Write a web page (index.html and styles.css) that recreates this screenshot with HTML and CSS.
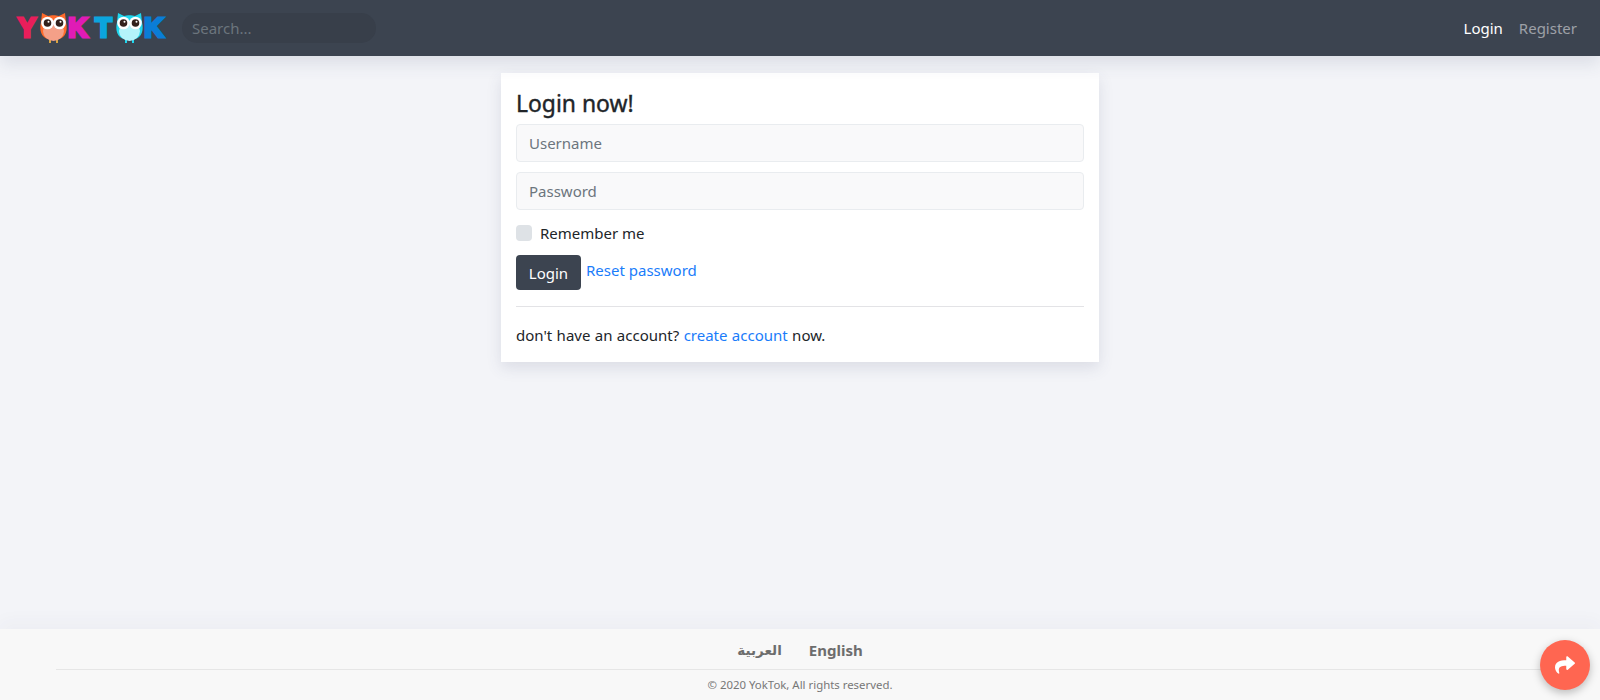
FILE: index.html
```html
<!DOCTYPE html>
<html lang="en">
<head>
<meta charset="utf-8">
<title>YokTok - Login</title>
<link rel="stylesheet" href="styles.css">
</head>
<body>
<header class="navbar">
  <a class="logo" href="#" aria-label="YokTok">
    <span class="logo-letter logo-y">Y</span>
    <svg class="owl owl-orange" viewBox="0 0 27 30" aria-hidden="true">
      <path class="owl-feet" d="M9 27h2v3H9zM16 27h2v3h-2z"/>
      <path class="owl-body" d="M2 0l6 3c3-1 8-1 11 0l6-3 1 9c1.500 7 .5 12-3 15-4 3.500-15 3.500-19 0-3.500-3-4.500-8-3-15z"/>
      <ellipse class="owl-belly" cx="13.500" cy="18" rx="10.500" ry="10"/>
      <circle class="owl-eye" cx="7.500" cy="10" r="6.300"/>
      <circle class="owl-eye" cx="19.500" cy="10" r="6.300"/>
      <circle class="owl-pupil" cx="7.500" cy="10" r="3.800"/>
      <circle class="owl-pupil" cx="19.500" cy="10" r="3.800"/>
      <circle class="owl-eye" cx="8.500" cy="8.800" r="1"/>
      <circle class="owl-eye" cx="20.500" cy="8.800" r="1"/>
    </svg>
    <span class="logo-letter logo-k1">K</span>
    <span class="logo-letter logo-t">T</span>
    <svg class="owl owl-blue" viewBox="0 0 27 30" aria-hidden="true">
      <path class="owl-feet" d="M9 27h2v3H9zM16 27h2v3h-2z"/>
      <path class="owl-body" d="M2 0l6 3c3-1 8-1 11 0l6-3 1 9c1.500 7 .5 12-3 15-4 3.500-15 3.500-19 0-3.500-3-4.500-8-3-15z"/>
      <ellipse class="owl-belly" cx="13.500" cy="18" rx="10.500" ry="10"/>
      <circle class="owl-eye" cx="7.500" cy="10" r="6.300"/>
      <circle class="owl-eye" cx="19.500" cy="10" r="6.300"/>
      <circle class="owl-pupil" cx="7.500" cy="10" r="3.800"/>
      <circle class="owl-pupil" cx="19.500" cy="10" r="3.800"/>
      <circle class="owl-eye" cx="8.500" cy="8.800" r="1"/>
      <circle class="owl-eye" cx="20.500" cy="8.800" r="1"/>
    </svg>
    <span class="logo-letter logo-k2">K</span>
  </a>
  <input class="search" type="text" placeholder="Search...">
  <nav class="nav-links">
    <a class="nav-link active" href="#">Login</a>
    <a class="nav-link" href="#">Register</a>
  </nav>
</header>

<main class="main">
  <section class="card">
    <h1 class="card-title">Login now!</h1>
    <form class="form">
      <input class="field" type="text" placeholder="Username">
      <input class="field" type="password" placeholder="Password">
      <label class="check"><span class="check-box"></span>Remember me</label>
      <div class="actions">
        <button class="btn" type="button">Login</button>
        <a class="link reset" href="#">Reset password</a>
      </div>
    </form>
    <hr class="rule">
    <p class="signup">don't have an account? <a class="link" href="#">create account</a> now.</p>
  </section>
</main>

<footer class="footer">
  <div class="langs">
    <a class="lang lang-ar" href="#" lang="ar" dir="rtl">العربية</a>
    <a class="lang" href="#">English</a>
  </div>
  <p class="copy">© 2020 YokTok, All rights reserved.</p>
</footer>

<button class="fab" type="button" aria-label="Share">
  <svg class="fab-icon" viewBox="0 0 512 512" aria-hidden="true"><path d="M503.700 189.800L327.700 37.900C312.300 24.500 288 35.300 288 56v80.100C127.400 137.900 0 170.100 0 322.300c0 61.400 39.600 122.300 83.300 154.100 13.700 9.900 33.100-2.500 28.100-18.600C66 312.800 132.900 274.300 288 272.100V360c0 20.700 24.300 31.500 39.700 18.200l176-152c11.100-9.600 11.100-26.800 0-36.400z"/></svg>
</button>
</body>
</html>
```
FILE: styles.css
```css
* { box-sizing: border-box; }

html, body { height: 100%; }

body {
  margin: 0;
  display: flex;
  flex-direction: column;
  min-height: 700px;
  overflow: hidden;
  background: #f3f4f8;
  color: #212529;
  font-family: "Noto Sans", "DejaVu Sans", sans-serif;
  font-size: 15px;
  line-height: 24px;
}

a { text-decoration: none; }

.navbar {
  position: relative;
  z-index: 2;
  flex: none;
  display: flex;
  align-items: center;
  height: 56px;
  padding: 0 16px;
  background: #3c4450;
  box-shadow: 0 8px 16px rgba(60, 70, 110, .12);
}

.logo { display: flex; align-items: center; width: 150px; height: 30px; margin-right: 16px; }

.logo-letter {
  display: block;
  width: 22px;
  text-align: center;
  font-family: "Liberation Sans", sans-serif;
  font-size: 27px;
  line-height: 30px;
  font-weight: 700;
  -webkit-text-stroke-width: 3px;
}

.logo-y { color: #e91e5b; -webkit-text-stroke-color: #e91e5b; margin-right: 2px; }
.logo-k1 { color: #e01bb6; -webkit-text-stroke-color: #e01bb6; margin-right: 3px; }
.logo-t { color: #0ba5de; -webkit-text-stroke-color: #0ba5de; width: 23px; margin-right: 1px; }
.logo-k2 { color: #0a7dd6; -webkit-text-stroke-color: #0a7dd6; }

.owl { flex: none; width: 27px; height: 30px; }
.owl-feet { fill: #d9a441; }
.owl-eye { fill: #fff; }
.owl-pupil { fill: #33211d; }
.owl-orange .owl-body { fill: #ff6a2b; }
.owl-orange .owl-belly { fill: #f4a088; }
.owl-blue .owl-body { fill: #1fd6ee; }
.owl-blue .owl-belly { fill: #b4f3fb; }
.owl-blue .owl-feet { fill: #1fd6ee; }

.search {
  width: 194px;
  height: 30px;
  padding: 0 10px;
  border: 0;
  border-radius: 15px;
  outline: 0;
  background: #383f4a;
  color: #ddd;
  font: inherit;
}

.search::placeholder { color: #6c757d; opacity: 1; }

.nav-links { display: flex; gap: 16px; margin-left: auto; margin-right: 7px; }
.nav-link { color: rgba(255, 255, 255, .5); }
.nav-link.active { color: #fff; }

.main {
  flex: 1;
  display: flex;
  justify-content: center;
  align-items: flex-start;
  padding-top: 17px;
}

.card {
  width: 598px;
  padding: 15px;
  background: #fff;
  box-shadow: 0 6px 14px rgba(60, 70, 110, .13);
}

.card-title {
  margin: 0 0 4px;
  font-size: 22.900px;
  line-height: 32px;
  font-weight: 400;
  -webkit-text-stroke: .4px #212529;
}

.form { display: flex; flex-direction: column; }

.field {
  height: 38px;
  margin-bottom: 10px;
  padding: 0 12px;
  border: 1px solid #e9ecef;
  border-radius: 4px;
  outline: 0;
  background: #f9f9fa;
  color: #495057;
  font: inherit;
}

.field::placeholder { color: #6c757d; opacity: 1; }

.check {
  display: flex;
  align-items: center;
  gap: 8px;
  height: 24px;
  margin-top: 1px;
}

.check-box {
  width: 16px;
  height: 16px;
  border-radius: 4px;
  background: #dee2e6;
}

.actions {
  display: flex;
  align-items: flex-start;
  gap: 5px;
  margin-top: 10px;
}

.btn {
  width: 65px;
  height: 35px;
  padding: 0;
  border: 0;
  border-radius: 4px;
  background: #3c4450;
  color: #fff;
  font: inherit;
}

.link { color: #1a7cfa; }
.reset { line-height: 30px; }

.rule {
  margin: 16px 0 0;
  border: 0;
  border-top: 1px solid #e3e3e6;
}

.signup { margin: 16px 0 0; word-spacing: .5px; }

.footer {
  flex: none;
  height: 71px;
  padding: 0 56px;
  background: #f8f8f8;
  box-shadow: 0 -8px 16px rgba(60, 70, 110, .03);
  text-align: center;
  color: #777;
}

.langs {
  display: flex;
  justify-content: center;
  gap: 27px;
  height: 41px;
  padding-top: 9px;
  border-bottom: 1px solid #e6e6e6;
}

.lang { color: #6d6d6d; font-weight: 700; font-size: 15px; }
.lang-ar { font-size: 13.500px; }

.copy {
  margin: 0;
  padding-top: 5px;
  font-size: 11.400px;
  line-height: 20px;
}

.fab {
  position: fixed;
  right: 10px;
  bottom: 10px;
  display: flex;
  align-items: center;
  justify-content: center;
  width: 50px;
  height: 50px;
  padding: 0;
  border: 0;
  border-radius: 50%;
  background: #ff6651;
  box-shadow: 0 3px 8px rgba(0, 0, 0, .25);
}

.fab-icon { width: 20px; height: 20px; fill: #fff; }
```
